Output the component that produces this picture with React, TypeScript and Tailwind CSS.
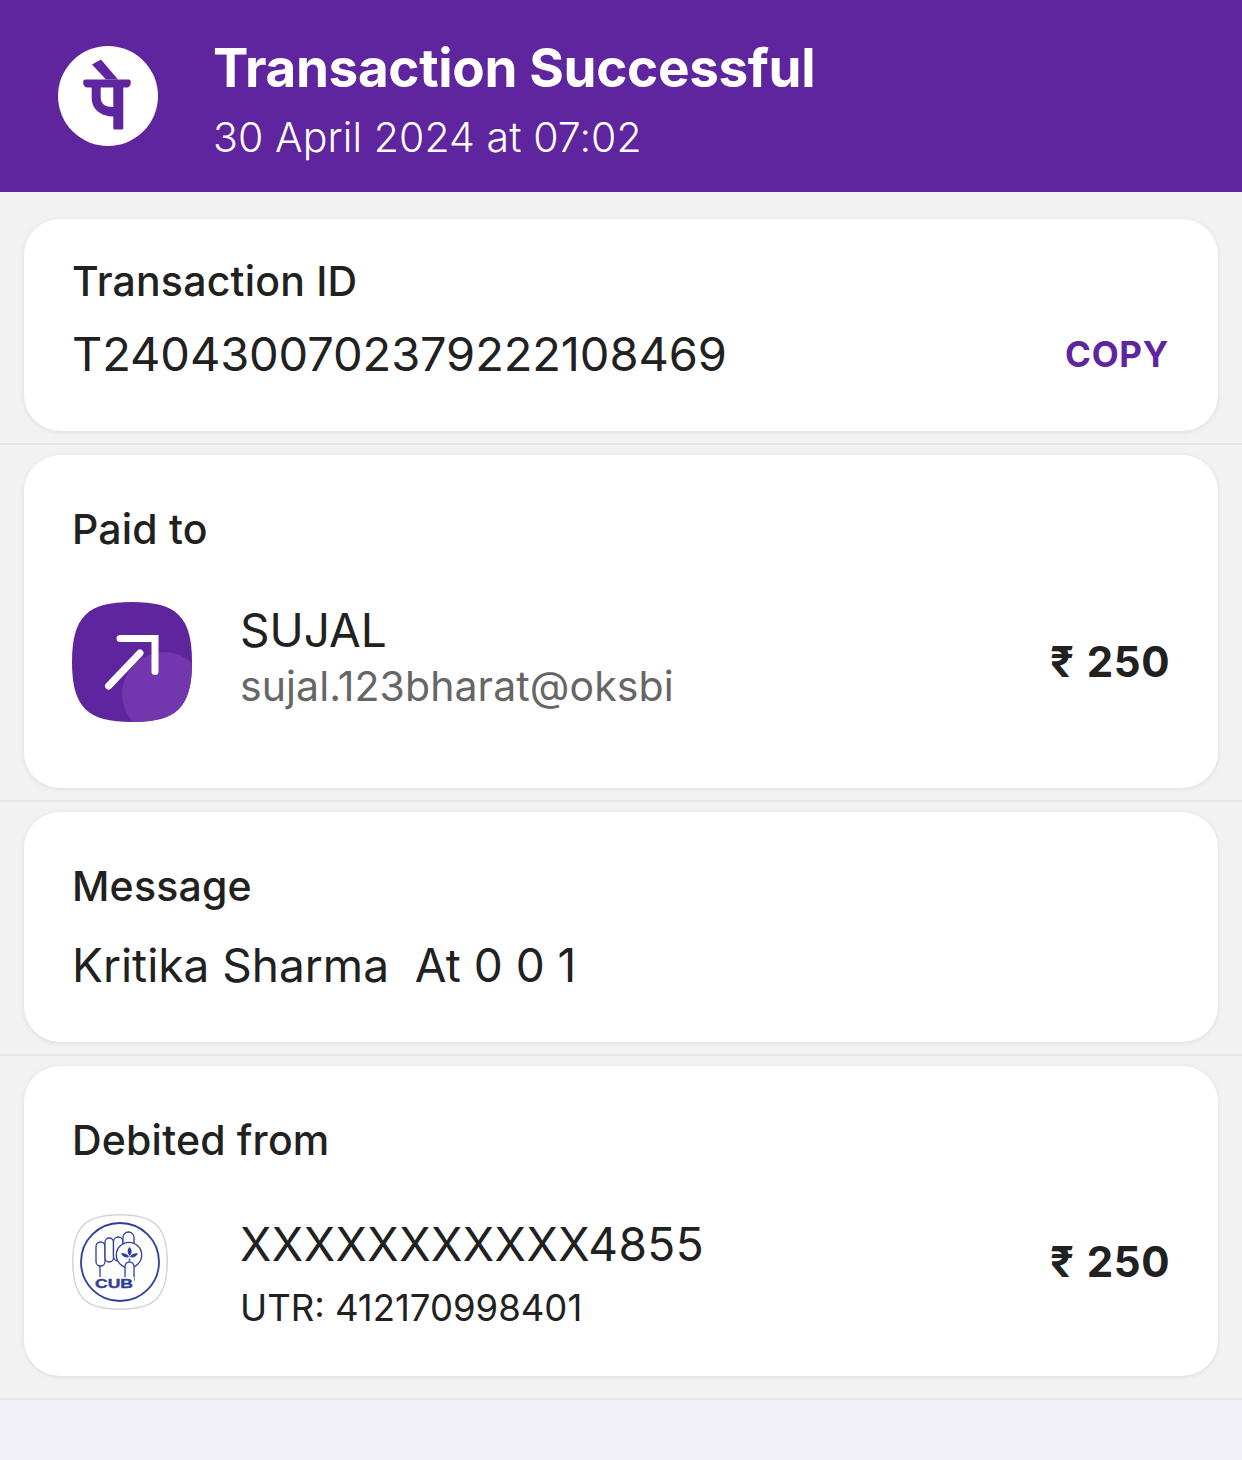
const FONT = { fontFamily: "Inter, 'Noto Sans', sans-serif" }

function PhonePeLogo() {
  return (
    <div className="w-[100px] h-[100px] rounded-full bg-white shrink-0">
      <svg viewBox="0 0 100 100" className="w-[100px] h-[100px]" fill="#5f259f">
        <path d="M34 18.500l9-5L60 33.500H48z" />
        <path d="M27.300 33.500H70.700c1.100 0 2 .9 2 2v2c0 2.200-1.800 4-4 4H29.300c-2.200 0-4-1.800-4-4v-2c0-1.100.9-2 2-2z" />
        <path d="M33.700 41V52C33.700 64 44 70.500 55.300 70.500V82c0 1 .7 1.500 1.500 1.500h7c.8 0 1.500-.7 1.500-1.500V41H55.300V61C47 61 42.700 58 42.700 51V41z" />
      </svg>
    </div>
  )
}

function SentIcon() {
  return (
    <svg viewBox="0 0 120 120" className="w-[120px] h-[120px] shrink-0">
      <path d="M60 0C105 0 120 15 120 60S105 120 60 120 0 105 0 60 15 0 60 0z" fill="#5f259f" />
      <clipPath id="sent-clip">
        <path d="M60 0C105 0 120 15 120 60S105 120 60 120 0 105 0 60 15 0 60 0z" />
      </clipPath>
      <circle cx="92" cy="92" r="42" fill="#7236ad" clipPath="url(#sent-clip)" />
      <path d="M48 36.500h35v33" stroke="#fff" strokeWidth="7" fill="none" strokeLinecap="round" strokeLinejoin="miter" />
      <path d="M36.500 84L68 51" stroke="#fff" strokeWidth="7" fill="none" strokeLinecap="round" />
    </svg>
  )
}

function CubLogo() {
  return (
    <svg viewBox="0 0 96 96" className="w-[96px] h-[96px] shrink-0">
      <path
        d="M48 .8C83 .8 95.200 13 95.200 48S83 95.200 48 95.200 .8 83 .8 48 13 .8 48 .8z"
        fill="#fff"
        stroke="#d4d4d4"
        strokeWidth="1.500"
      />
      <circle cx="48" cy="48" r="39" fill="none" stroke="#2f3f9e" strokeWidth="1.800" />
      <g fill="#fff" stroke="#2f3f9e" strokeWidth="1.300">
        <path d="M28 38v27h27V46z" />
        <rect x="24" y="28" width="9" height="24" rx="4.500" />
        <rect x="33" y="24" width="8.500" height="24" rx="4.200" />
        <rect x="41.500" y="23" width="9.500" height="24" rx="4.700" />
        <rect x="51" y="18" width="11" height="20" rx="5.500" />
        <circle cx="57" cy="41" r="12.700" />
        <rect x="53" y="48" width="9" height="22" rx="4.500" />
      </g>
      <path d="M57.500 33c2.800 2.800 2.800 6 .2 9-2.600-3-2.800-6.200-.2-9z" fill="#2f3f9e" />
      <path d="M49 39.500c3.500-.6 6.500.4 8.300 3.500-3.300 1.200-6.300 0-8.300-3.500zM66 39.500c-3.500-.6-6.500.4-8.300 3.500 3.300 1.200 6.300 0 8.300-3.500z" fill="#2f3f9e" />
      <path d="M57.500 43c0 1.500-.5 2.500-1.600 3.500h3.200c-1.100-1-1.600-2-1.600-3.500z" fill="#2f3f9e" />
      <rect x="22" y="63" width="40" height="12" fill="#fff" />
      <text
        x="23"
        y="74"
        textLength="38"
        lengthAdjust="spacingAndGlyphs"
        fill="#2f3f9e"
        stroke="#2f3f9e"
        strokeWidth="0.400"
        fontSize="13"
        fontWeight="700"
        fontFamily="'Liberation Sans', sans-serif"
      >
        CUB
      </text>
    </svg>
  )
}

function Amount() {
  return (
    <span className="text-[42px] leading-none font-bold tracking-[0.5px] text-[#212121] whitespace-pre">
      <span className="mr-[2px]">₹</span> 250
    </span>
  )
}

function Section({ children, className }: { children: React.ReactNode; className: string }) {
  return (
    <section className="px-6 pt-[10px] pb-3 border-b-2 border-[#e6e1ef]">
      <div className={`bg-white rounded-[36px] shadow-[0_1px_5px_rgba(0,0,0,0.09)] px-[48px] ${className}`}>{children}</div>
    </section>
  )
}

function Label({ children }: { children: React.ReactNode }) {
  return <p className="text-[41px] leading-[54px] font-medium tracking-[0.2px]">{children}</p>
}

export default function App() {
  return (
    <main className="w-[1242px] h-[1460px] bg-[#f2f1f8] overflow-hidden text-[#212121]" style={FONT}>
      <header className="h-[192px] bg-[#5f259f] flex items-center pl-[58px] pb-[1px]">
        <PhonePeLogo />
        <div className="ml-[55px] mt-[6px] text-white">
          <h1 className="text-[53px] leading-[64px] font-bold tracking-[-0.35px] mb-[12px]">Transaction Successful</h1>
          <p className="text-[41px] leading-[50px] font-light tracking-[0.1px]">30 April 2024 at 07:02</p>
        </div>
      </header>

      <div className="bg-[#f2f2f2]">
        <div className="h-[17px]" />
        <Section className="h-[212px] pt-[35px]">
          <Label>Transaction ID</Label>
          <div className="flex items-center justify-between mt-[16px]">
            <span className="text-[47px] leading-[60px] font-normal tracking-[-0.1px]">T2404300702379222108469</span>
            <span className="text-[35px] font-bold text-[#5f259f] tracking-[0.7px] mr-[1px]">COPY</span>
          </div>
        </Section>

        <Section className="h-[333px] pt-[47px]">
          <Label>Paid to</Label>
          <div className="flex items-center mt-[46px]">
            <SentIcon />
            <div className="ml-[48px] flex-1 mb-[10px]">
              <p className="text-[46px] leading-[56px]">SUJAL</p>
              <p className="text-[41px] leading-[52px] text-[#666666] tracking-[0.1px] mt-[2px]">sujal.123bharat@oksbi</p>
            </div>
            <Amount />
          </div>
        </Section>

        <Section className="h-[230px] pt-[47px]">
          <Label>Message</Label>
          <p className="text-[46px] leading-[60px] mt-[22px] whitespace-pre">Kritika Sharma  At 0 0 1</p>
        </Section>

        <section className="px-6 pt-[10px] pb-[22px] border-b-2 border-[#e6e1ef]">
          <div className="bg-white rounded-[36px] shadow-[0_1px_5px_rgba(0,0,0,0.09)] px-[48px] h-[310px] pt-[47px]">
            <Label>Debited from</Label>
            <div className="flex items-center mt-[26px]">
              <CubLogo />
              <div className="ml-[72px] flex-1 mt-[23px]">
                <p className="text-[46px] leading-[56px] tracking-[0.45px]">XXXXXXXXXXX4855</p>
                <p className="text-[36.500px] leading-[46px] mt-[13px]">UTR: 412170998401</p>
              </div>
              <Amount />
            </div>
          </div>
        </section>
      </div>
    </main>
  )
}
